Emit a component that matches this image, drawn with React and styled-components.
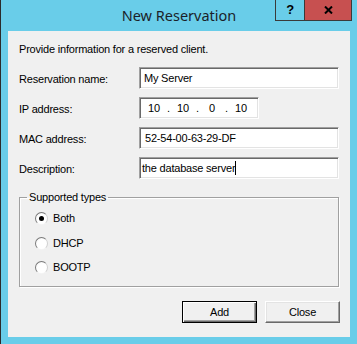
import styled, { createGlobalStyle } from "styled-components";

/* Global ---------------------------*/
const GlobalStyle = createGlobalStyle`
    html, body {
        margin: 0;
        padding: 0;
        background: #69cde9;
    }
`;

/* Parts ---------------------------*/
const CloseGlyph = () => (
    <svg width="9" height="8" viewBox="0 0 9 8">
        <path d="M1 0.5 L8 7.5 M8 0.5 L1 7.5" stroke="#000" strokeWidth="2" />
    </svg>
);

const Radio = ({ checked, label }) => (
    <RadioRow>
        <RadioDot $checked={checked} />
        <span>{label}</span>
    </RadioRow>
);

const App = () => {
    return (
        <>
            <GlobalStyle />
            <Window className="Window">
                <TitleBar>
                    <span />
                    <Title>New Reservation</Title>
                    <Captions>
                        <CaptionButton $w={28}>?</CaptionButton>
                        <CaptionButton $w={46} $close>
                            <CloseGlyph />
                        </CaptionButton>
                    </Captions>
                </TitleBar>

                <Client>
                    <Intro>Provide information for a reserved client.</Intro>

                    <Form>
                        <Label>Reservation name:</Label>
                        <Field>My Server</Field>

                        <Label>IP address:</Label>
                        <IpField>
                            <Octet>10</Octet>
                            <Dot>.</Dot>
                            <Octet>10</Octet>
                            <Dot>.</Dot>
                            <Octet>0</Octet>
                            <Dot>.</Dot>
                            <Octet>10</Octet>
                        </IpField>

                        <Label>MAC address:</Label>
                        <Field $indent={3}>52-54-00-63-29-DF</Field>

                        <Label>Description:</Label>
                        <Field $indent={0}>
                            the database server
                            <Caret />
                        </Field>
                    </Form>

                    <Group>
                        <legend>Supported types</legend>
                        <RadioList>
                            <Radio checked label="Both" />
                            <Radio label="DHCP" />
                            <Radio label="BOOTP" />
                        </RadioList>
                    </Group>

                    <Buttons>
                        <Button $default>Add</Button>
                        <Button>Close</Button>
                    </Buttons>
                </Client>
            </Window>
        </>
    );
};

export default App;

/* Styles ---------------------------*/
const Window = styled.div`
    width: 357px;
    height: 344px;
    box-sizing: border-box;
    border-left: 1px solid #2b2b2b;
    background: #69cde9;
    display: flex;
    flex-direction: column;
    font-family: "Liberation Sans", Arial, sans-serif;
    font-size: 11px;
    letter-spacing: -0.2px;
    color: #000000;
`;

const TitleBar = styled.div`
    height: 31px;
    display: grid;
    grid-template-columns: 1fr auto 1fr;
    align-items: start;
`;

const Title = styled.div`
    padding-top: 5px;
    font-family: "Noto Sans", "Open Sans", sans-serif;
    font-size: 14.5px;
    line-height: 20px;
    letter-spacing: 0;
    color: #1b1f2a;
`;

const Captions = styled.div`
    justify-self: end;
    display: flex;
    margin-right: 5px;
    border: 1px solid #3a3a3a;
    border-top: none;
`;

const CaptionButton = styled.div`
    width: ${(p) => p.$w}px;
    height: 20px;
    display: flex;
    align-items: center;
    justify-content: center;
    background: ${(p) => (p.$close ? "#c75050" : "transparent")};
    border-left: ${(p) => (p.$close ? "1px solid #3a3a3a" : "none")};
    font-family: "Liberation Sans", Arial, sans-serif;
    font-weight: bold;
    font-size: 13px;
    line-height: 20px;
`;

const Client = styled.div`
    margin: 0 7px 7px 7px;
    flex: 1;
    background: #f0f0f0;
    padding: 12px 10px 0 11px;
    display: flex;
    flex-direction: column;
`;

const Intro = styled.div`
    line-height: 13px;
`;

const Form = styled.div`
    margin-top: 11px;
    display: grid;
    grid-template-columns: 120px 200px;
    grid-auto-rows: 22px;
    row-gap: 8px;
    align-items: center;
`;

const Label = styled.div`
    padding-top: 3px;
    line-height: 13px;
`;

const sunken = `
    box-sizing: border-box;
    height: 22px;
    background: #ffffff;
    border: 1px solid;
    border-color: #a0a0a0 #ffffff #ffffff #a0a0a0;
    box-shadow: inset 1px 1px #696969, inset -1px -1px #e3e3e3;
`;

const Field = styled.div`
    ${sunken}
    display: flex;
    align-items: center;
    padding-left: ${(p) => (p.$indent ?? 2) + 2}px;
    white-space: pre;
    line-height: 13px;
`;

const Caret = styled.span`
    display: inline-block;
    width: 1px;
    height: 14px;
    background: #000000;
`;

const IpField = styled.div`
    ${sunken}
    width: 120px;
    display: flex;
    align-items: center;
    padding-left: 3px;
`;

const Octet = styled.span`
    width: 22px;
    text-align: center;
`;

const Dot = styled.span`
    width: 7px;
    text-align: center;
`;

const Group = styled.fieldset`
    margin: 12px 0 0 0;
    padding: 0;
    width: 320px;
    height: 96px;
    box-sizing: border-box;
    border: 1px solid #a0a0a0;
    box-shadow: inset 1px 1px #ffffff, 1px 1px #ffffff;

    legend {
        margin-left: 7px;
        padding: 0 2px;
        line-height: 13px;
    }
`;

const RadioList = styled.div`
    padding: 8px 0 0 15px;
    display: flex;
    flex-direction: column;
    gap: 11.5px;
`;

const RadioRow = styled.div`
    display: flex;
    align-items: center;
    gap: 5px;
    height: 13px;
    line-height: 13px;
`;

const RadioDot = styled.span`
    position: relative;
    width: 13px;
    height: 13px;
    box-sizing: border-box;
    border-radius: 50%;
    border: 1px solid;
    border-color: #7a7a7a #d0d0d0 #f4f4f4 #7a7a7a;
    background: radial-gradient(circle at 60% 60%, #ffffff 55%, #e6e6e6 100%);

    &::after {
        content: "";
        display: ${(p) => (p.$checked ? "block" : "none")};
        position: absolute;
        left: 3px;
        top: 3px;
        width: 5px;
        height: 5px;
        border-radius: 50%;
        background: #000000;
    }
`;

const Buttons = styled.div`
    margin-top: 14px;
    display: flex;
    justify-content: flex-end;
    gap: 8px;
`;

const Button = styled.div`
    width: 75px;
    height: 22px;
    box-sizing: border-box;
    display: flex;
    align-items: center;
    justify-content: center;
    background: #f0f0f0;
    border: 1px solid;
    border-color: ${(p) =>
        p.$default ? "#000000" : "#ffffff #696969 #696969 #ffffff"};
    box-shadow: ${(p) =>
        p.$default
            ? "inset 1px 1px #ffffff, inset -1px -1px #696969, inset -2px -2px #a0a0a0"
            : "inset -1px -1px #a0a0a0, inset 1px 1px #e3e3e3"};
    line-height: 13px;
`;
